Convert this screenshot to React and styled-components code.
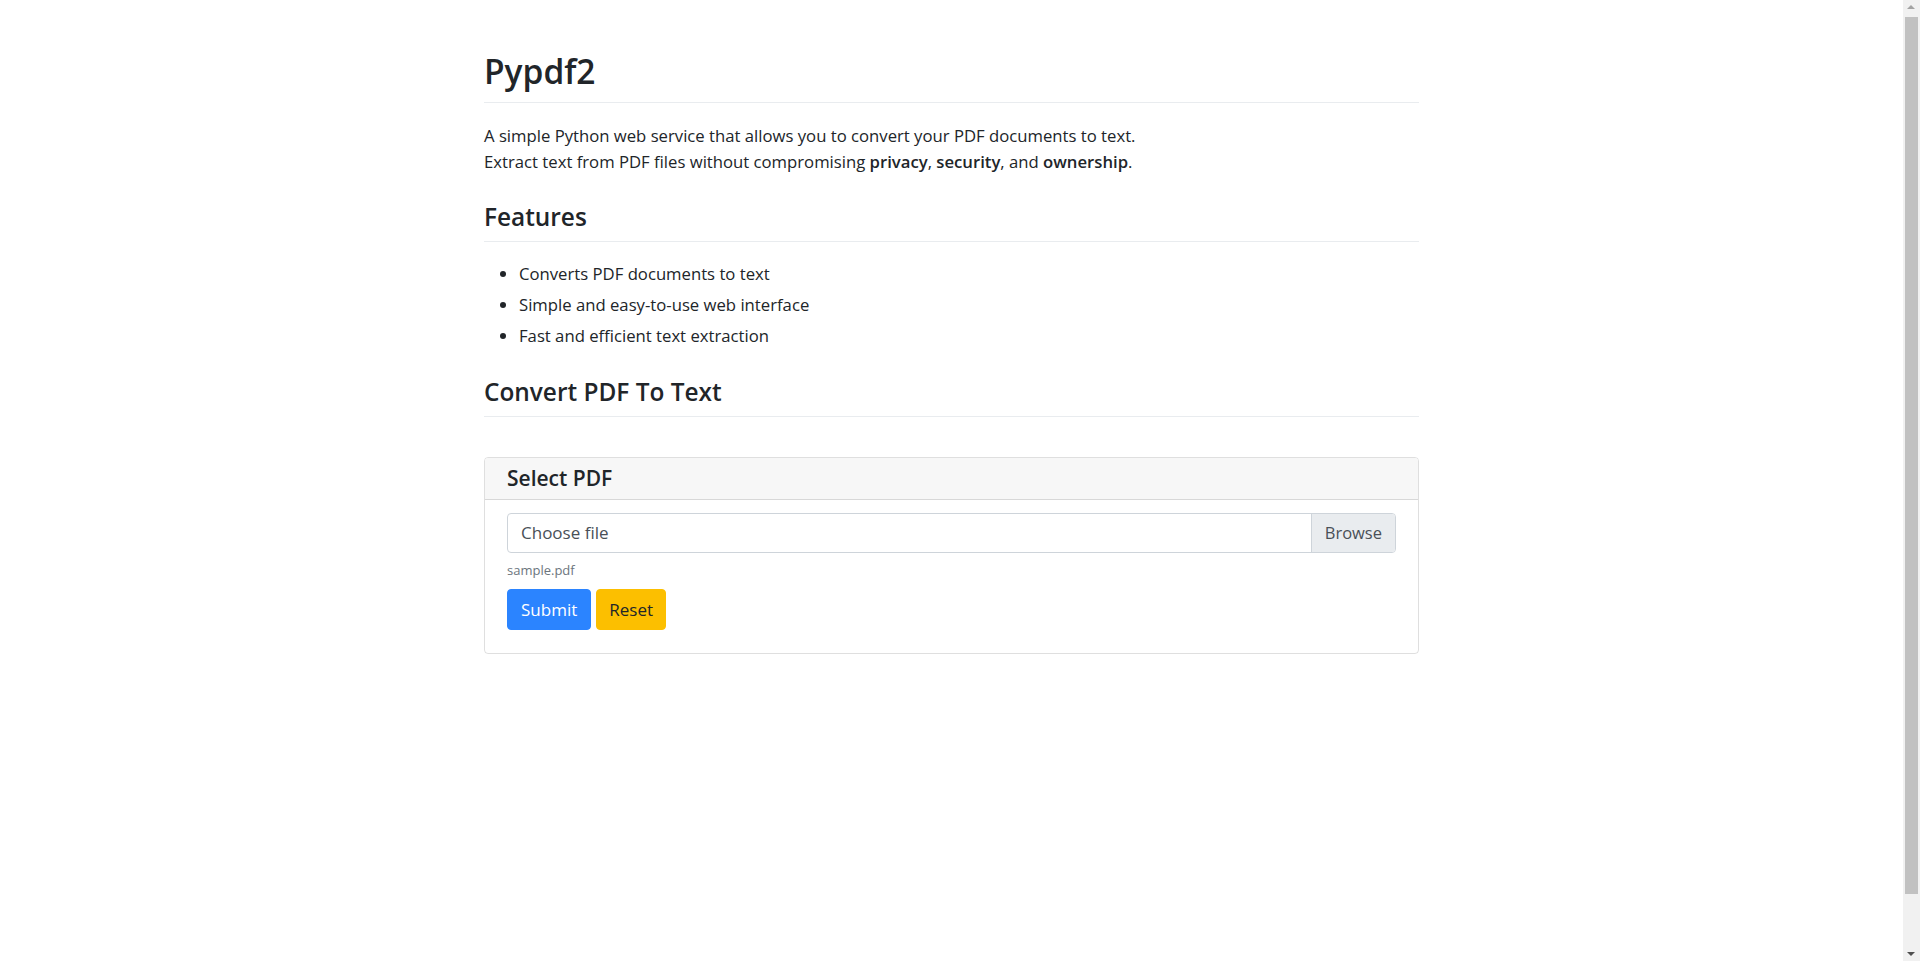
import React from "react"
import styled, { createGlobalStyle } from "styled-components"

const GlobalStyle = createGlobalStyle`
  body {
    margin: 0;
    font-family: "Open Sans", "Noto Sans", "Liberation Sans", sans-serif;
    font-size: 16.7px;
    line-height: 1.5;
    color: #212529;
    background: #fff;
  }
  * { box-sizing: border-box; }
`

const Page = styled.main`
  padding-right: 17px;
`

const Container = styled.div`
  width: 935px;
  margin: 0 auto;
  padding-top: 48px;
`

const Title = styled.h1`
  margin: 0 0 20px;
  padding-bottom: 8px;
  font-size: 33.5px;
  font-weight: 600;
  line-height: 46px;
  border-bottom: 1px solid #e9ecef;
`

const Lead = styled.p`
  margin: 0 0 26px;
  line-height: 26px;
  strong { font-weight: 600; }
`

const SectionHeading = styled.h2`
  margin: 0 0 16px;
  padding-bottom: 9px;
  font-size: 24.4px;
  font-weight: 600;
  line-height: 31px;
  border-bottom: 1px solid #e9ecef;
`

const FeatureList = styled.ul`
  margin: 0 0 25px;
  padding-left: 35px;
  li { line-height: 31px; }
`

const Spacer = styled.div`
  height: 24px;
`

const Card = styled.section`
  border: 1px solid rgba(0, 0, 0, 0.125);
  border-radius: 4px;
  overflow: hidden;
`

const CardHeader = styled.header`
  padding: 7px 22px;
  background: #f7f7f7;
  border-bottom: 1px solid rgba(0, 0, 0, 0.125);
  font-size: 21px;
  font-weight: 600;
  line-height: 27px;
`

const CardBody = styled.div`
  padding: 13px 22px 23px;
`

const FileField = styled.label`
  display: flex;
  height: 40px;
  border: 1px solid #ced4da;
  border-radius: 4px;
  overflow: hidden;
  font-size: 17px;
  color: #495057;
  cursor: pointer;
`

const FileLabel = styled.span`
  flex: 1;
  display: flex;
  align-items: center;
  padding: 0 13px;
`

const BrowseButton = styled.span`
  display: flex;
  align-items: center;
  padding: 0 13px;
  font-size: 16.5px;
  background: #e9ecef;
  border-left: 1px solid #ced4da;
`

const FileName = styled.small`
  display: block;
  margin: 7px 0 9px;
  font-size: 13px;
  color: #6c757d;
  line-height: 20px;
`

const Actions = styled.div`
  display: flex;
  gap: 5px;
`

const Button = styled.button`
  height: 41px;
  padding: 0 ${p => p.$pad || 13}px;
  border: 1px solid ${p => p.$bg};
  border-radius: 4px;
  background: ${p => p.$bg};
  color: ${p => p.$fg};
  font-family: inherit;
  font-size: 17px;
  cursor: pointer;
`

const Scrollbar = styled.div`
  position: fixed;
  top: 0;
  right: 0;
  width: 17px;
  height: 100vh;
  background: #f1f1f1;
`

const ScrollThumb = styled.div`
  position: absolute;
  top: 17px;
  left: 2px;
  right: 2px;
  height: 877px;
  background: #c1c1c1;
`

const ScrollArrow = styled.div`
  position: absolute;
  left: 4px;
  width: 0;
  height: 0;
  border-left: 4.5px solid transparent;
  border-right: 4.5px solid transparent;
  ${p => p.$down
    ? `bottom: 5px; border-top: 4px solid #505050;`
    : `top: 5px; border-bottom: 4px solid #a3a3a3;`}
`

export default function App() {
  return (
    <Page>
      <GlobalStyle />
      <Container>
        <Title>Pypdf2</Title>
        <Lead>
          A simple Python web service that allows you to convert your PDF documents to text.
          <br />
          Extract text from PDF files without compromising <strong>privacy</strong>, <strong>security</strong>, and <strong>ownership</strong>.
        </Lead>
        <SectionHeading>Features</SectionHeading>
        <FeatureList>
          <li>Converts PDF documents to text</li>
          <li>Simple and easy-to-use web interface</li>
          <li>Fast and efficient text extraction</li>
        </FeatureList>
        <SectionHeading>Convert PDF To Text</SectionHeading>
        <Spacer />
        <Card>
          <CardHeader>Select PDF</CardHeader>
          <CardBody>
            <FileField>
              <FileLabel>Choose file</FileLabel>
              <BrowseButton>Browse</BrowseButton>
            </FileField>
            <FileName>sample.pdf</FileName>
            <Actions>
              <Button $bg="#2b84ff" $fg="#fff">Submit</Button>
              <Button $bg="#fcbf00" $fg="#212529" $pad={12}>Reset</Button>
            </Actions>
          </CardBody>
        </Card>
      </Container>
      <Scrollbar>
        <ScrollArrow />
        <ScrollThumb />
        <ScrollArrow $down />
      </Scrollbar>
    </Page>
  )
}
